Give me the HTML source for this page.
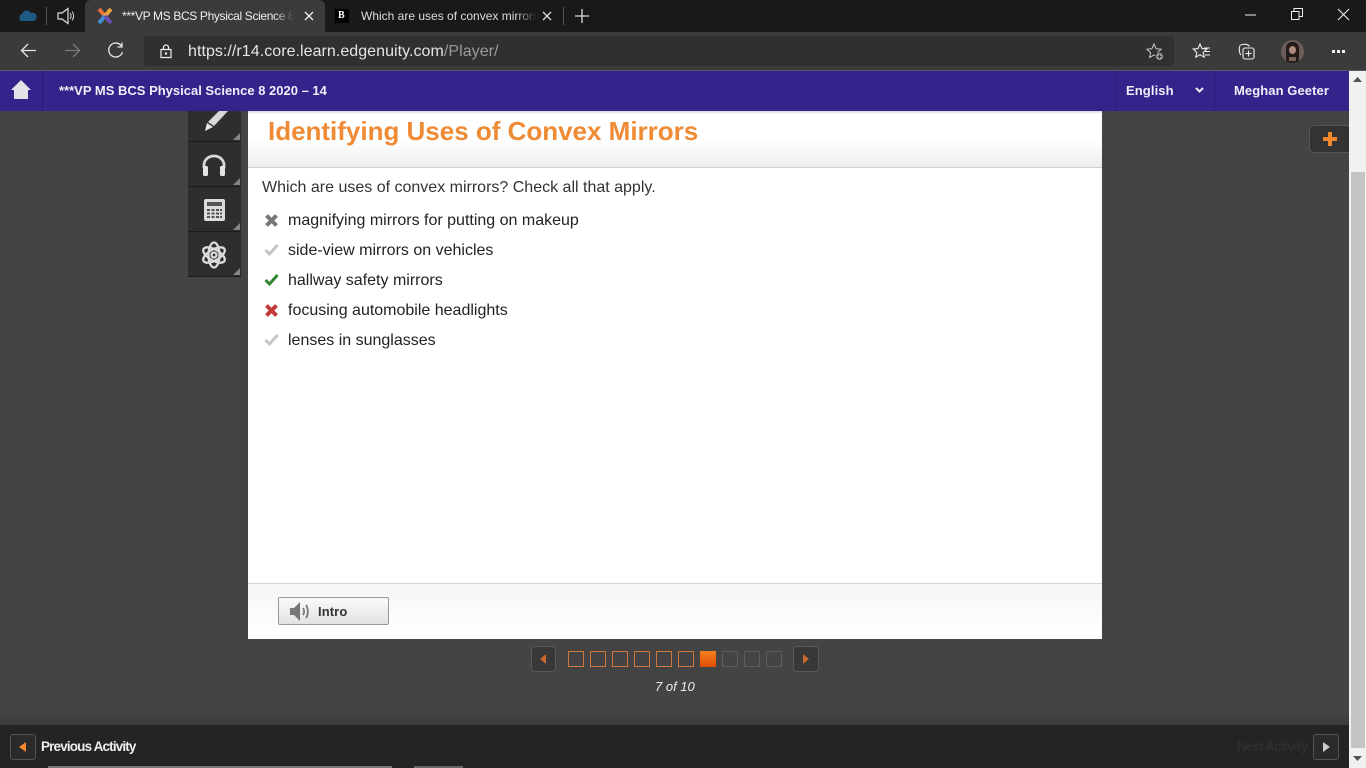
<!DOCTYPE html>
<html><head><meta charset="utf-8"><style>
html,body{margin:0;padding:0;width:1366px;height:768px;overflow:hidden;background:#444;font-family:"Liberation Sans",sans-serif}
.a{position:absolute}
svg{position:absolute;overflow:visible}
.t{position:absolute;white-space:nowrap}
.sq{position:absolute;top:651px;width:14px;height:14px;border:1px solid #d0763a}
.sq.o{border-color:#5c5c5c}
.tool{position:absolute;left:188px;width:53px;height:43px;background:#2e2e2e;border-bottom:1px solid #1c1c1c}
.tool:after{content:"";position:absolute;right:1px;bottom:1px;border-style:solid;border-width:0 0 7px 7px;border-color:transparent transparent #858585 transparent}
.opt{position:absolute;left:288px;font-size:16px;color:#222;white-space:nowrap}
</style></head><body>
<!-- tab strip -->
<div class="a" style="left:0;top:0;width:1366px;height:32px;background:#191919"></div>
<div class="a" style="left:85px;top:0;width:240px;height:32px;background:#3b3b3b;border-radius:6px 6px 0 0"></div>
<svg style="left:19px;top:8px" width="18" height="16"><path d="M2 13a4 4 0 0 1 1-7 5 5 0 0 1 9-1 4 4 0 0 1 3 8z" fill="#1f5a85"/></svg>
<div class="a" style="left:46px;top:7px;width:1px;height:18px;background:#555"></div>
<svg style="left:57px;top:7px" width="18" height="18" fill="none" stroke="#ddd" stroke-width="1.2"><path d="M1 6h4l6-4.500v15l-6-4.500h-4z"/><path d="M13 6c1.500 2 1.500 4 0 6M15 4.500c2.200 3 2.200 6 0 9" stroke-width="1"/></svg>
<svg style="left:97px;top:8px" width="16" height="16" fill="none" stroke-width="4"><path d="M2 1l6 7" stroke="#e8743b"/><path d="M14 1l-6 7" stroke="#e8a23b"/><path d="M2 15l6-7" stroke="#3f8fd0"/><path d="M14 15l-6-7" stroke="#6a4fb0"/></svg>
<div class="t" style="left:122px;top:8px;width:172px;overflow:hidden;font-size:12px;line-height:16px;color:#eee;letter-spacing:-.35px">***VP MS BCS Physical Science 8 2020 – 14</div>
<div class="a" style="left:274px;top:6px;width:20px;height:20px;background:linear-gradient(90deg,rgba(59,59,59,0),#3b3b3b)"></div>
<svg style="left:304px;top:11px" width="10" height="10" stroke="#eee" stroke-width="1.300"><path d="M1 1l8 8M9 1l-8 8"/></svg>
<div class="a" style="left:335px;top:9px;width:14px;height:14px;background:#000"></div>
<div class="t" style="left:338px;top:9px;font:bold 10px/14px 'Liberation Serif',serif;color:#fff">B</div>
<div class="t" style="left:361px;top:8px;width:176px;overflow:hidden;font-size:12px;line-height:16px;color:#ddd">Which are uses of convex mirrors? Check</div>
<div class="a" style="left:515px;top:6px;width:22px;height:20px;background:linear-gradient(90deg,rgba(25,25,25,0),#191919)"></div>
<svg style="left:542px;top:11px" width="10" height="10" stroke="#ddd" stroke-width="1.300"><path d="M1 1l8 8M9 1l-8 8"/></svg>
<div class="a" style="left:563px;top:7px;width:1px;height:18px;background:#555"></div>
<svg style="left:575px;top:9px" width="14" height="14" stroke="#ddd" stroke-width="1.300"><path d="M7 0v14M0 7h14"/></svg>
<svg style="left:1245px;top:14px" width="11" height="2"><path d="M0 1h11" stroke="#eee" stroke-width="1"/></svg>
<svg style="left:1291px;top:8px" width="12" height="12" fill="none" stroke="#eee" stroke-width="1"><path d="M.5 3.500h7.500v8h-7.500zM3 3.500v-3h8.500v8h-3.500"/></svg>
<svg style="left:1337px;top:8px" width="13" height="13" stroke="#eee" stroke-width="1.100"><path d="M1 1l11 11M12 1l-11 11"/></svg>
<!-- toolbar -->
<div class="a" style="left:0;top:32px;width:1366px;height:38px;background:#3b3b3b"></div>
<div class="a" style="left:0;top:70px;width:1366px;height:1px;background:#5a5a6a"></div>
<div class="a" style="left:144px;top:36px;width:1030px;height:30px;background:#303030;border-radius:4px"></div>
<svg style="left:20px;top:43px" width="17" height="15" fill="none" stroke="#e8e8e8" stroke-width="1.300"><path d="M16 7.500h-15M8 1l-6.500 6.500 6.500 6.500"/></svg>
<svg style="left:64px;top:43px" width="17" height="15" fill="none" stroke="#7a7a7a" stroke-width="1.300"><path d="M1 7.500h15M9 1l6.500 6.500-6.500 6.500"/></svg>
<svg style="left:107px;top:42px" width="17" height="17" fill="none" stroke="#e8e8e8" stroke-width="1.300"><path d="M14.500 4a7 7 0 1 0 1 6"/><path d="M15 .5v4.500h-4.500"/></svg>
<svg style="left:160px;top:44px" width="12" height="14" fill="none" stroke="#eee" stroke-width="1.200"><path d="M1 5.500h10v8h-10zM3.500 5.500v-2a2.500 2.500 0 0 1 5 0v2"/><path d="M5.500 9h1v1h-1z"/></svg>
<div class="t" style="left:188px;top:42px;font-size:16px;line-height:19px;color:#fff;letter-spacing:.05px"><span style="color:#e4e4e4">https://r14.core.learn.edgenuity.com</span><span style="color:#9b9b9b">/Player/</span></div>
<svg style="left:1146px;top:43px" width="18" height="18" fill="none" stroke="#c8c8c8" stroke-width="1"><path d="M8 1l2.100 4.600 5 .6-3.700 3.400 1 4.900-4.400-2.500-4.400 2.500 1-4.900-3.700-3.400 5-.6z"/><circle cx="13.500" cy="13.500" r="4" fill="#999" stroke="#303030" stroke-width=".8"/><path d="M13.500 11.500v4M11.500 13.500h4" stroke="#333"/></svg>
<svg style="left:1193px;top:43px" width="18" height="16" fill="none" stroke="#eee" stroke-width="1.100"><path d="M7 1l2 4.600 4.800.5-3.600 3.300 1 4.800-4.200-2.500-4.200 2.500 1-4.800-3.600-3.300 4.800-.5z"/><path d="M11 5h6M12 8.500h5M12 12h5"/></svg>
<svg style="left:1238px;top:43px" width="17" height="17" fill="none" stroke="#eee" stroke-width="1.100"><path d="M3 12c-2-2-2-5-1.500-8a3 3 0 0 1 3-2.500c3-.5 6 0 7 2"/><rect x="5" y="5" width="11" height="11" rx="2"/><path d="M10.500 7.500v6M7.500 10.500h6"/></svg>
<div class="a" style="left:1281px;top:40px;width:23px;height:23px;border-radius:50%;background:#6c5d59;overflow:hidden">
<div class="a" style="left:5px;top:2px;width:13px;height:21px;background:#231a1a;border-radius:6px 6px 0 0"></div>
<div class="a" style="left:8px;top:6px;width:7px;height:8px;background:#b08a7c;border-radius:50%"></div>
<div class="a" style="left:8px;top:17px;width:7px;height:4px;background:#7a6055"></div>
</div>
<div class="a" style="left:1332px;top:50px;width:2.500px;height:2.500px;background:#eee;box-shadow:5px 0 #eee,10px 0 #eee"></div>
<!-- purple header -->
<div class="a" style="left:0;top:71px;width:1349px;height:40px;background:#35228a"></div>
<div class="a" style="left:42px;top:71px;width:1px;height:40px;background:#2b1b72"></div>
<div class="a" style="left:1115px;top:71px;width:1px;height:40px;background:#2b1b72"></div>
<div class="a" style="left:1214px;top:71px;width:1px;height:40px;background:#2b1b72"></div>
<svg style="left:11px;top:80px" width="20" height="20"><path d="M10 0l10 10h-3v9h-14v-9h-3z" fill="#e2e2e8"/></svg>
<div class="t" style="left:59px;top:83px;font-size:13px;line-height:16px;font-weight:bold;color:#f0eef8">***VP MS BCS Physical Science 8 2020 – 14</div>
<div class="t" style="left:1126px;top:83px;font-size:13px;line-height:16px;font-weight:bold;color:#f0eef8;letter-spacing:.1px">English</div>
<svg style="left:1195px;top:87px" width="9" height="7" fill="none" stroke="#f0eef8" stroke-width="2"><path d="M1 1l3.500 3.500 3.500-3.500"/></svg>
<div class="t" style="left:1234px;top:83px;font-size:13px;line-height:16px;font-weight:bold;color:#f0eef8;letter-spacing:.08px">Meghan Geeter</div>
<!-- scrollbar -->
<div class="a" style="left:1349px;top:71px;width:17px;height:697px;background:#f1f1f1"></div>
<div class="a" style="left:1351px;top:172px;width:14px;height:576px;background:#c4c4c4"></div>
<svg style="left:1353px;top:77px" width="9" height="5"><path d="M0 5l4.500-5 4.500 5z" fill="#505050"/></svg>
<svg style="left:1353px;top:756px" width="9" height="5"><path d="M0 0l4.500 5 4.500-5z" fill="#505050"/></svg>
<!-- plus tab -->
<div class="a" style="left:1309px;top:125px;width:40px;height:28px;background:#333;border:1px solid #555;border-right:none;border-radius:5px 0 0 5px;box-sizing:border-box"></div>
<svg style="left:1323px;top:132px" width="14" height="14"><path d="M5 0h4v5h5v4h-5v5h-4v-5h-5v-4h5z" fill="#f0862e"/></svg>
<!-- side tools -->
<div class="tool" style="top:111px;height:30px"></div>
<div class="tool" style="top:142px;height:44px"></div>
<div class="tool" style="top:187px;height:44px"></div>
<div class="tool" style="top:232px;height:44px"></div>
<svg style="left:202px;top:111px" width="25" height="21"><path d="M6 11l11-11 9 0-14 15z" fill="#d8d8d8"/><path d="M5 12l6 4-8 4z" fill="#e8e8e8"/></svg>
<svg style="left:201px;top:154px" width="26" height="23" fill="none"><path d="M3 14v-3a10 9 0 0 1 20 0v3" stroke="#d8d8d8" stroke-width="2.800"/><rect x="2" y="12" width="5" height="10" rx="1.500" fill="#e4e4e4"/><rect x="19" y="12" width="5" height="10" rx="1.500" fill="#e4e4e4"/></svg>
<svg style="left:204px;top:199px" width="21" height="22"><rect width="21" height="22" rx="2" fill="#dcdcdc"/><rect x="3" y="3" width="15" height="4" fill="#555"/><path d="M3 10h3v2h-3zM7.500 10h3v2h-3zM12 10h3v2h-3zM16 10h2v2h-2zM3 13.500h3v2h-3zM7.500 13.500h3v2h-3zM12 13.500h3v2h-3zM16 13.500h2v2h-2zM3 17h3v2h-3zM7.500 17h3v2h-3zM12 17h3v2h-3zM16 17h2v2h-2z" fill="#555"/></svg>
<svg style="left:200px;top:241px" width="28" height="28" fill="none" stroke="#dcdcdc" stroke-width="2.300"><ellipse cx="14" cy="14" rx="12" ry="5.500" transform="rotate(30 14 14)"/><ellipse cx="14" cy="14" rx="12" ry="5.500" transform="rotate(-30 14 14)"/><ellipse cx="14" cy="14" rx="5.500" ry="12.500"/><circle cx="14" cy="14" r="2.500"/></svg>
<!-- card -->
<div class="a" style="left:248px;top:111px;width:854px;height:528px;background:#fff"></div>
<div class="a" style="left:248px;top:111px;width:854px;height:56px;background:linear-gradient(#fff 50%,#eee);border-bottom:1px solid #d2d2d2"></div>
<div class="a" style="left:248px;top:111px;width:854px;height:3px;background:linear-gradient(#d5d2e4,#fff)"></div>
<div class="t" style="left:268px;top:116px;font-size:26px;line-height:31px;font-weight:bold;color:#ef8b35;letter-spacing:-.01px">Identifying Uses of Convex Mirrors</div>
<div class="t" style="left:262px;top:178px;font-size:16px;line-height:19px;color:#333">Which are uses of convex mirrors? Check all that apply.</div>
<svg style="left:265px;top:214px" width="13" height="13"><path d="M1.500 1.500l10 10M11.500 1.500l-10 10" stroke="#777" stroke-width="4"/></svg>
<svg style="left:264px;top:243px" width="15" height="13"><path d="M1.500 7l4 4 8-9" fill="none" stroke="#c6c6c6" stroke-width="3"/></svg>
<svg style="left:264px;top:273px" width="15" height="13"><path d="M1.500 7l4 4 8-9" fill="none" stroke="#2e862e" stroke-width="3"/></svg>
<svg style="left:265px;top:304px" width="13" height="13"><path d="M1.500 1.500l10 10M11.500 1.500l-10 10" stroke="#c33a3a" stroke-width="4"/></svg>
<svg style="left:264px;top:333px" width="15" height="13"><path d="M1.500 7l4 4 8-9" fill="none" stroke="#c6c6c6" stroke-width="3"/></svg>
<div class="opt" style="top:211px;line-height:19px">magnifying mirrors for putting on makeup</div>
<div class="opt" style="top:241px;line-height:19px">side-view mirrors on vehicles</div>
<div class="opt" style="top:271px;line-height:19px">hallway safety mirrors</div>
<div class="opt" style="top:301px;line-height:19px">focusing automobile headlights</div>
<div class="opt" style="top:331px;line-height:19px">lenses in sunglasses</div>
<!-- card footer -->
<div class="a" style="left:248px;top:583px;width:854px;height:56px;background:linear-gradient(#f6f6f6,#fff);border-top:1px solid #d2d2d2;box-sizing:border-box"></div>
<div class="a" style="left:278px;top:597px;width:111px;height:28px;box-sizing:border-box;border:1px solid #999;border-radius:2px;background:linear-gradient(#fafafa,#e2e2e2)"></div>
<svg style="left:290px;top:602px" width="22" height="19"><path d="M0 6h4l6-6v19l-6-6h-4z" fill="#777"/><path d="M13 6c1.500 2 1.500 5 0 7M16 3c2.500 4 2.500 9 0 13" fill="none" stroke="#777" stroke-width="1.800"/></svg>
<div class="t" style="left:318px;top:604px;font-size:13px;line-height:16px;font-weight:bold;color:#333;letter-spacing:.1px">Intro</div>
<!-- pager -->
<div class="a" style="left:531px;top:646px;width:25px;height:26px;box-sizing:border-box;background:#383838;border:1px solid #585858;border-radius:4px"></div>
<svg style="left:540px;top:654px" width="6" height="10"><path d="M6 0v10l-6-5z" fill="#c9692f"/></svg>
<div class="sq" style="left:568px"></div><div class="sq" style="left:590px"></div><div class="sq" style="left:612px"></div><div class="sq" style="left:634px"></div><div class="sq" style="left:656px"></div><div class="sq" style="left:678px"></div>
<div class="a" style="left:700px;top:651px;width:16px;height:16px;background:linear-gradient(#f47f1e,#e04e05)"></div>
<div class="sq o" style="left:722px"></div><div class="sq o" style="left:744px"></div><div class="sq o" style="left:766px"></div>
<div class="a" style="left:793px;top:646px;width:26px;height:26px;box-sizing:border-box;background:#383838;border:1px solid #585858;border-radius:4px"></div>
<svg style="left:803px;top:654px" width="6" height="10"><path d="M0 0v10l6-5z" fill="#c9692f"/></svg>
<div class="t" style="left:655px;top:679px;font-size:13px;line-height:16px;font-style:italic;color:#eee">7 of 10</div>
<!-- bottom bar -->
<div class="a" style="left:0;top:712px;width:1349px;height:14px;background:linear-gradient(#444,#3a3a3a)"></div>
<div class="a" style="left:0;top:725px;width:1349px;height:43px;background:#242424"></div>
<div class="a" style="left:10px;top:734px;width:26px;height:26px;box-sizing:border-box;background:#2a2a2a;border:1px solid #555;border-radius:3px"></div>
<svg style="left:19px;top:742px" width="7" height="10"><path d="M7 0v10l-7-5z" fill="#f0862e"/></svg>
<div class="t" style="left:41px;top:739px;font-size:13.500px;line-height:16px;font-weight:bold;color:#eee;letter-spacing:-.85px">Previous Activity</div>
<div class="t" style="left:1237px;top:739px;font-size:13.500px;line-height:16px;font-weight:bold;color:#2f2f2f;letter-spacing:-.85px">Next Activity</div>
<div class="a" style="left:1313px;top:734px;width:26px;height:26px;box-sizing:border-box;background:#2a2a2a;border:1px solid #555;border-radius:3px"></div>
<svg style="left:1323px;top:742px" width="7" height="10"><path d="M0 0v10l7-5z" fill="#ccc"/></svg>
<div class="a" style="left:48px;top:766px;width:344px;height:2px;background:#777"></div>
<div class="a" style="left:414px;top:766px;width:49px;height:2px;background:#666"></div>
</body></html>
